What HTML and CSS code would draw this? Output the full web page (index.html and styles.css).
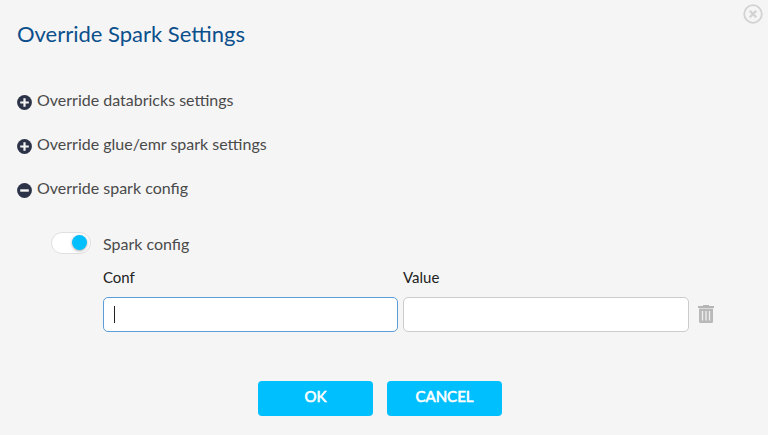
FILE: index.html
```html
<!DOCTYPE html>
<html lang="en">
<head>
<meta charset="utf-8">
<title>Override Spark Settings</title>
<link rel="stylesheet" href="styles.css">
</head>
<body>
<main class="dialog">
  <button class="close" aria-label="Close">
    <svg width="20" height="20" viewBox="0 0 20 20" fill="none" stroke="#d2d2d2"><circle cx="10" cy="10" r="8.8" stroke-width="1.8"/><path d="M6.8 6.8l6.4 6.4M13.2 6.8l-6.4 6.4" stroke-width="2.3"/></svg>
  </button>
  <h1 class="title">Override Spark Settings</h1>
  <section class="sections">
    <div class="section">
      <svg class="section-icon" viewBox="0 0 15 15"><circle cx="7.5" cy="7.5" r="7.4" fill="#2c3248"/><path d="M3.2 7.5h8.6M7.5 3.2v8.6" stroke="#f5f5f5" stroke-width="2.2"/></svg>
      <span>Override databricks settings</span>
    </div>
    <div class="section">
      <svg class="section-icon" viewBox="0 0 15 15"><circle cx="7.5" cy="7.5" r="7.4" fill="#2c3248"/><path d="M3.2 7.5h8.6M7.5 3.2v8.6" stroke="#f5f5f5" stroke-width="2.2"/></svg>
      <span>Override glue/emr spark settings</span>
    </div>
    <div class="section">
      <svg class="section-icon" viewBox="0 0 15 15"><circle cx="7.5" cy="7.5" r="7.4" fill="#2c3248"/><path d="M3.2 7.5h8.6" stroke="#f5f5f5" stroke-width="2.4"/></svg>
      <span>Override spark config</span>
    </div>
  </section>
  <section class="config">
    <div class="switch"><span class="knob"></span></div>
    <div class="config-body">
      <div class="config-label">Spark config</div>
      <div class="fields">
        <div class="field field-conf">
          <div class="field-label">Conf</div>
          <div class="input focused"><span class="caret"></span></div>
        </div>
        <div class="field field-value">
          <div class="field-label">Value</div>
          <div class="input"></div>
        </div>
        <svg class="trash" width="16" height="18" viewBox="0 0 16 18"><path d="M5 0h6v1h5v2H0V1h5z" fill="#b5b5b5"/><path d="M1 4h14v12.500a1.500 1.500 0 0 1-1.500 1.500h-11A1.500 1.500 0 0 1 1 16.500z" fill="#b9b9b9"/><path d="M1 3h14v1H1z" fill="#dcdcdc"/><path d="M4.500 6v9.500M8 6v9.500M11.500 6v9.500" stroke="#f0f0f0" stroke-width="1.300"/></svg>
      </div>
    </div>
  </section>
  <footer class="actions">
    <button class="action">OK</button>
    <button class="action">CANCEL</button>
  </footer>
</main>
</body>
</html>
```
FILE: styles.css
```css
* { box-sizing: border-box; }
body {
  margin: 0;
  background: #f5f5f5;
  font: 16px/20px Lato, sans-serif;
  color: #4a4a4a;
}
button { border: 0; padding: 0; font-family: inherit; }
.dialog {
  position: relative;
  height: 435px;
  padding: 20px 17px 0;
  overflow: hidden;
}
.close {
  position: absolute;
  top: 4px;
  right: 5px;
  width: 20px;
  height: 20px;
  background: none;
}
.close svg { display: block; }
.title {
  margin: 0;
  font-size: 22px;
  line-height: 28px;
  font-weight: 400;
  color: #0b4f8c;
}
.sections {
  display: flex;
  flex-direction: column;
  gap: 24px;
  margin-top: 42px;
}
.section { display: flex; gap: 5px; height: 20px; }
.section-icon { width: 15px; height: 15px; margin-top: 5px; }
.config {
  display: flex;
  gap: 12px;
  margin: 34px 0 0 34px;
}
.switch {
  display: flex;
  justify-content: flex-end;
  flex-shrink: 0;
  width: 40px;
  height: 22px;
  padding: 2px 3px 0 0;
  border: 1px solid #e0e0e0;
  border-radius: 11px;
  background: #fff;
}
.knob {
  width: 15px;
  height: 15px;
  border-radius: 50%;
  background: #00bfff;
  box-shadow: 0 1px 3px rgba(0, 0, 0, .35);
}
.config-label { margin-top: 2px; }
.fields { display: flex; margin-top: 13px; }
.field-label {
  margin-bottom: 10px;
  font-size: 15px;
  color: #222;
}
.field-conf { width: 295px; margin-right: 5px; }
.field-value { width: 286px; }
.input {
  display: flex;
  align-items: center;
  height: 35px;
  padding-left: 10px;
  border: 1px solid #ccc;
  border-radius: 5px;
  background: #fff;
}
.focused { border-color: #5b9dd9; }
.caret { width: 1px; height: 17px; background: #222; }
.trash { margin: 38px 0 0 9px; }
.actions {
  display: flex;
  gap: 14px;
  margin: 49px 0 0 241px;
}
.action {
  width: 115px;
  height: 35px;
  padding-bottom: 5px;
  border-radius: 4px;
  background: #00bfff;
  color: #fff;
  font-size: 15px;
  font-weight: 400;
  -webkit-text-stroke: .6px #fff;
}
```
